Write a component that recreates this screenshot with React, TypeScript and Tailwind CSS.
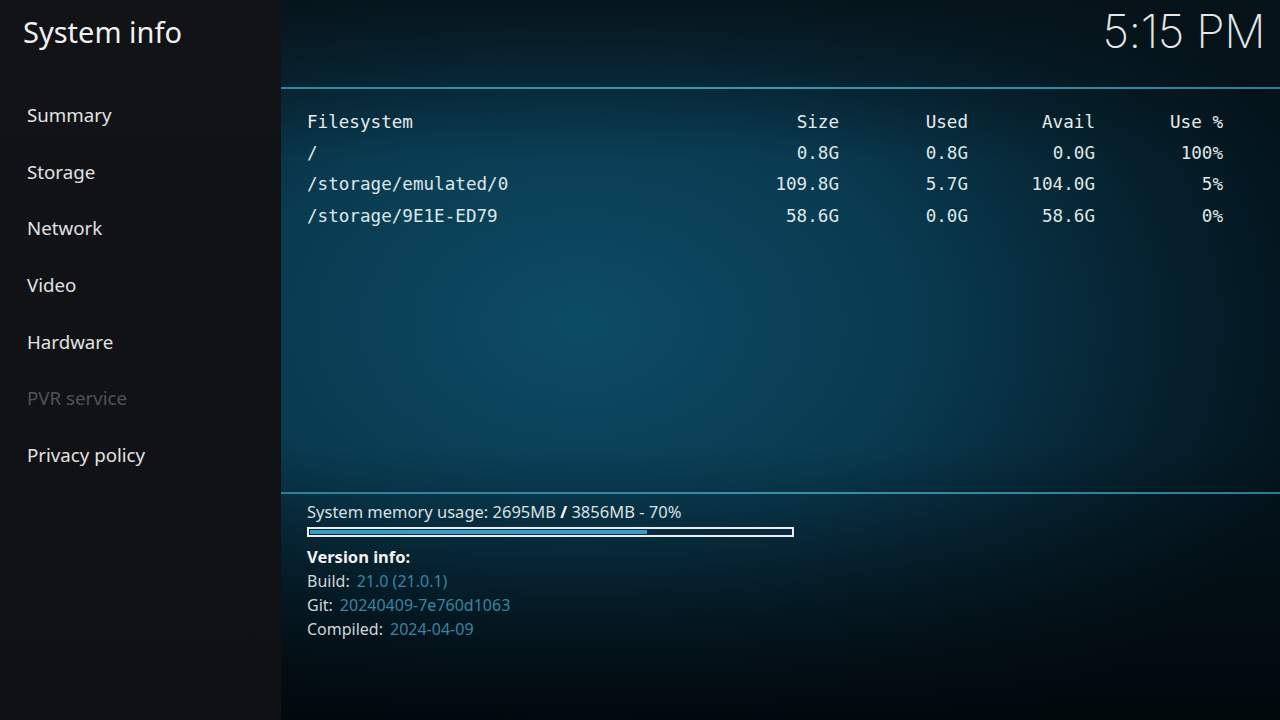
const MENU = [
  { label: "Summary" },
  { label: "Storage" },
  { label: "Network" },
  { label: "Video" },
  { label: "Hardware" },
  { label: "PVR service", disabled: true },
  { label: "Privacy policy" },
];

const DISKS = [
  { fs: "/", size: "0.8G", used: "0.8G", avail: "0.0G", pct: "100%" },
  { fs: "/storage/emulated/0", size: "109.8G", used: "5.7G", avail: "104.0G", pct: "5%" },
  { fs: "/storage/9E1E-ED79", size: "58.6G", used: "0.0G", avail: "58.6G", pct: "0%" },
];

const VERSION = [
  { label: "Build:", value: "21.0 (21.0.1)" },
  { label: "Git:", value: "20240409-7e760d1063" },
  { label: "Compiled:", value: "2024-04-09" },
];

function Row({ cells, head }: { cells: string[]; head?: boolean }) {
  return (
    <div
      className={`grid grid-cols-[402px_130px_129px_127px_128px] h-[31.4px] items-center ${
        head ? "text-[#e6ecee]" : "text-[#dfe6e8]"
      }`}
    >
      {cells.map((c, i) => (
        <span key={i} className={i === 0 ? "text-left" : "text-right"}>
          {c}
        </span>
      ))}
    </div>
  );
}

export default function App() {
  const memPct = 70;

  return (
    <div
      className="flex w-[1280px] h-[720px] overflow-hidden bg-[#111316] text-[#e3e3e3]"
      style={{ fontFamily: '"Noto Sans", "Open Sans", sans-serif' }}
    >
      {/* Sidebar */}
      <aside className="w-[281px] shrink-0 flex flex-col bg-[linear-gradient(180deg,#111316_0%,#0f1114_100%)]">
        <h1 className="pl-[23px] h-[62px] flex items-center text-[29px] leading-none text-[#f0f0f0]">
          System info
        </h1>
        <nav className="flex flex-col pt-[25px]">
          {MENU.map((m) => (
            <div
              key={m.label}
              className={`pl-[27px] h-[56.6px] flex items-center text-[18.7px] ${
                m.disabled ? "text-[#4f5256]" : "text-[#e2e2e2]"
              }`}
            >
              {m.label}
            </div>
          ))}
        </nav>
      </aside>

      {/* Main panel */}
      <main className="flex-1 flex flex-col bg-[linear-gradient(180deg,rgba(6,18,24,0.85)_0%,rgba(6,18,24,0)_22%,rgba(6,18,24,0)_62%,rgba(2,8,12,0.95)_100%),radial-gradient(ellipse_75%_70%_at_30%_45%,#0c4c65_0%,#093a50_45%,#05202c_80%,#03141c_100%)]">
        <header className="h-[87px] flex items-start justify-end pr-[15px]">
          <span
            className="text-[46px] font-[150] leading-none mt-[8px] tracking-[-0.5px] text-[#e6e6e6]"
            style={{ fontFamily: "Inter, sans-serif" }}
          >
            5:15 PM
          </span>
        </header>

        <div className="h-[2px] bg-[linear-gradient(90deg,#2d8aa6_0%,#3c97b2_50%,#2a7d98_100%)]" />

        {/* Filesystem table */}
        <section
          className="pl-[26px] pt-[17px] text-[17.6px] h-[403px]"
          style={{ fontFamily: '"DejaVu Sans Mono", monospace' }}
        >
          <Row head cells={["Filesystem", "Size", "Used", "Avail", "Use %"]} />
          {DISKS.map((d) => (
            <Row key={d.fs} cells={[d.fs, d.size, d.used, d.avail, d.pct]} />
          ))}
        </section>

        <div className="h-[2px] bg-[linear-gradient(90deg,#2a7f9b_0%,#3590ab_50%,#2a7d98_100%)]" />

        {/* Memory + version */}
        <section className="pl-[26px] pt-[7px]">
          <p className="text-[16.5px] leading-[22px] text-[#d9e0e3]">
            System memory usage: 2695MB <b className="font-bold text-white">/</b> 3856MB - {memPct}%
          </p>
          <div className="mt-[4px] w-[487px] h-[10px] border-2 border-[#e8eef0] p-[1px]">
            <div className="h-full bg-[#3a9cc4]" style={{ width: `${memPct}%` }} />
          </div>
          <h2 className="mt-[8px] text-[16.5px] leading-[24px] font-bold text-[#f2f2f2]">Version info:</h2>
          {VERSION.map((v) => (
            <div key={v.label} className="flex gap-[7px] text-[16px] leading-[24px]">
              <span className="text-[#cfd6d8]">{v.label}</span>
              <span className="text-[#3a84a4]">{v.value}</span>
            </div>
          ))}
        </section>
      </main>
    </div>
  );
}
